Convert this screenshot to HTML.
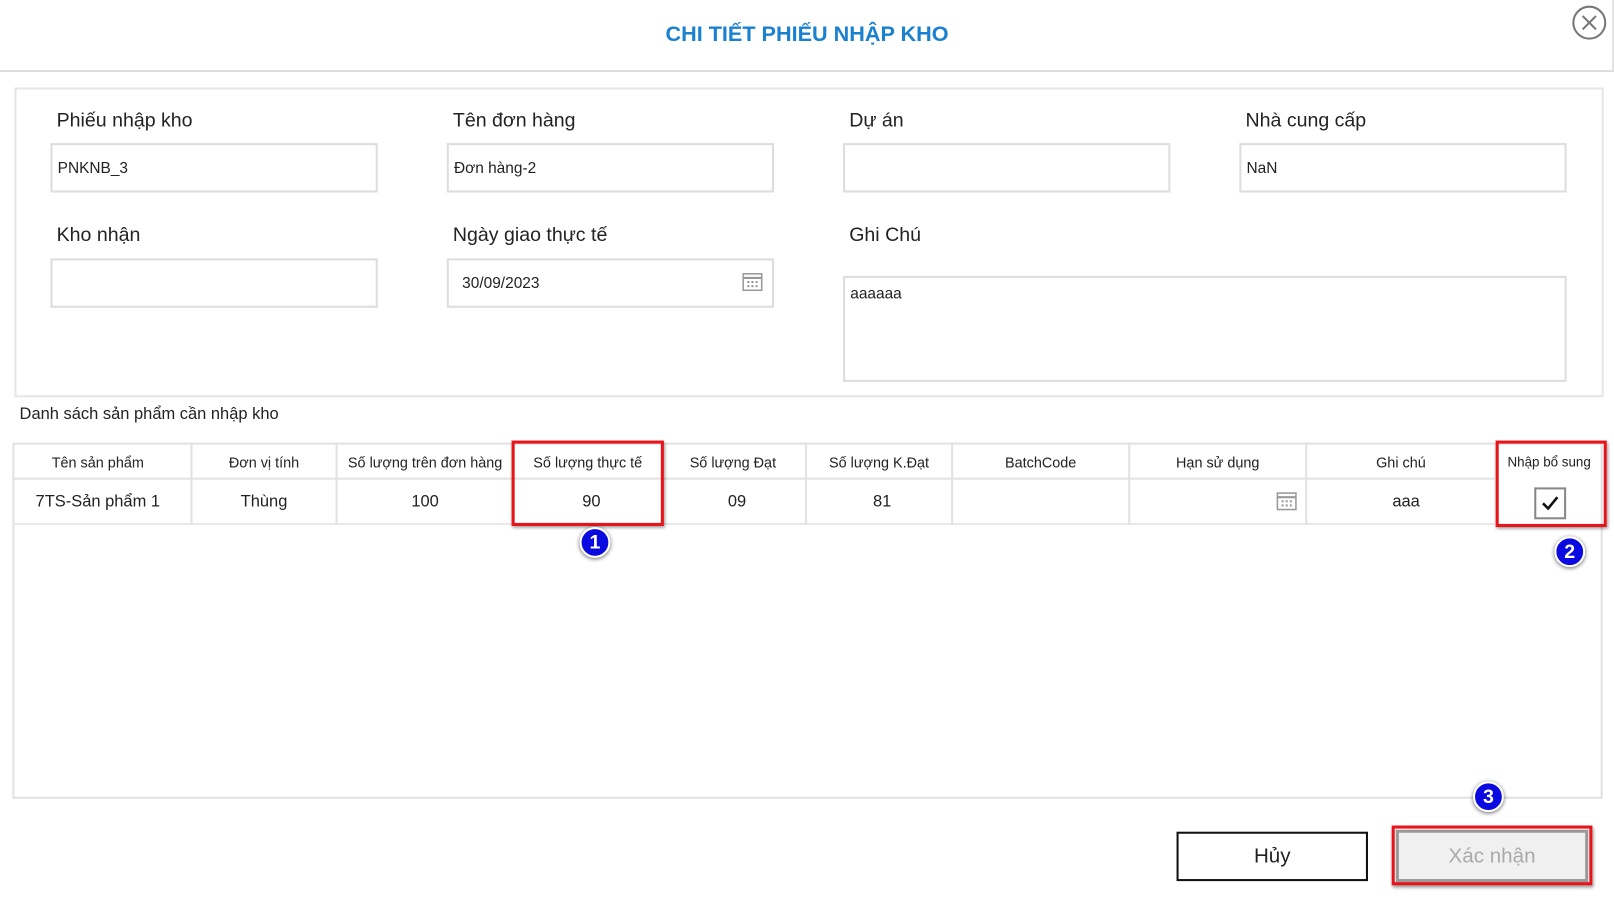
<!DOCTYPE html>
<html><head><meta charset="utf-8"><style>
html,body{margin:0;padding:0;background:#fff;width:1614px;height:906px;overflow:hidden}
#w{position:absolute;left:0;top:0;width:1568px;height:880px;transform:scale(1.02934);transform-origin:0 0;font-family:"Liberation Sans",sans-serif;color:#222}
.a{position:absolute}
.lbl{font-size:19px;color:#222}
.in{position:absolute;border:2px solid #ddd;box-sizing:border-box;background:#fff;font-size:15px;padding-left:5px;line-height:45px}
.c{position:absolute;box-sizing:border-box;text-align:center;font-size:14px}
.badge{position:absolute;width:26px;height:26px;border-radius:50%;background:#0a0ae0;border:2px solid #fff;box-shadow:0 1px 4px rgba(0,0,0,.6);color:#fff;font-weight:bold;font-size:19px;text-align:center;line-height:27px}
.red{position:absolute;border:3px solid #e8141a;box-sizing:border-box;box-shadow:1px 2px 3px rgba(0,0,0,.4)}
</style></head><body><div id="w">
<div class="a" style="left:0;top:0;width:1566px;height:68px;border-right:2px solid #e4e4e4;border-bottom:2px solid #ddd"></div>
<div class="a" style="left:0;top:22px;width:1568px;text-align:center;font-size:21px;font-weight:bold;color:#1a80d0">CHI TIẾT PHIẾU NHẬP KHO</div>
<svg class="a" style="left:1527px;top:5px" width="34" height="34"><circle cx="17" cy="17" r="15.5" fill="none" stroke="#777" stroke-width="2"/><path d="M10.5 10.5L23.5 23.5M23.5 10.5L10.5 23.5" stroke="#777" stroke-width="2"/></svg>

<div class="a" style="left:14px;top:85px;width:1544px;height:301px;border:2px solid #e6e6e6;box-sizing:border-box"></div>
<div class="a lbl" style="left:55px;top:107px">Phiếu nhập kho</div>
<div class="a lbl" style="left:440px;top:107px">Tên đơn hàng</div>
<div class="a lbl" style="left:825px;top:107px">Dự án</div>
<div class="a lbl" style="left:1210px;top:107px">Nhà cung cấp</div>
<div class="in" style="left:49px;top:139px;width:318px;height:48px">PNKNB_3</div>
<div class="in" style="left:434px;top:139px;width:318px;height:48px">Đơn hàng-2</div>
<div class="in" style="left:819px;top:139px;width:318px;height:48px"></div>
<div class="in" style="left:1204px;top:139px;width:318px;height:48px">NaN</div>
<div class="a lbl" style="left:55px;top:218px">Kho nhận</div>
<div class="a lbl" style="left:440px;top:218px">Ngày giao thực tế</div>
<div class="a lbl" style="left:825px;top:218px">Ghi Chú</div>
<div class="in" style="left:49px;top:251px;width:318px;height:48px"></div>
<div class="in" style="left:434px;top:251px;width:318px;height:48px;padding-left:13px">30/09/2023</div>
<svg class="a" style="left:721px;top:265px" width="20" height="18"><rect x="1" y="1" width="18" height="16" fill="none" stroke="#999" stroke-width="1.5"/><path d="M1 5H19" stroke="#999" stroke-width="2"/><g fill="#999"><rect x="5" y="8" width="2" height="2"/><rect x="9" y="8" width="2" height="2"/><rect x="13" y="8" width="2" height="2"/><rect x="5" y="12" width="2" height="2"/><rect x="9" y="12" width="2" height="2"/><rect x="13" y="12" width="2" height="2"/></g></svg>
<div class="in" style="left:819px;top:268px;width:703px;height:103px;line-height:31px">aaaaaa</div>

<div class="a" style="left:19px;top:394px;font-size:16px">Danh sách sản phẩm cần nhập kho</div>

<div class="a" style="left:12px;top:430px;width:1545px;height:346px;border:2px solid #e2e2e2;box-sizing:border-box"></div>
<div class="a" style="left:12px;top:464px;width:1440px;height:2px;background:#e2e2e2"></div>
<div class="a" style="left:12px;top:508px;width:1440px;height:2px;background:#e8e8e8"></div>
<div class="a" style="left:185px;top:430px;width:2px;height:80px;background:#e2e2e2"></div>
<div class="a" style="left:326px;top:430px;width:2px;height:80px;background:#e2e2e2"></div>
<div class="a" style="left:782px;top:430px;width:2px;height:80px;background:#e2e2e2"></div>
<div class="a" style="left:924px;top:430px;width:2px;height:80px;background:#e2e2e2"></div>
<div class="a" style="left:1096px;top:430px;width:2px;height:80px;background:#e2e2e2"></div>
<div class="a" style="left:1268px;top:430px;width:2px;height:80px;background:#e2e2e2"></div>
<div class="c" style="left:12px;top:441px;width:166px">Tên sản phẩm</div>
<div class="c" style="left:186px;top:441px;width:141px">Đơn vị tính</div>
<div class="c" style="left:327px;top:441px;width:172px">Số lượng trên đơn hàng</div>
<div class="c" style="left:498px;top:441px;width:146px">Số lượng thực tế</div>
<div class="c" style="left:644px;top:441px;width:136px">Số lượng Đạt</div>
<div class="c" style="left:783px;top:441px;width:142px">Số lượng K.Đạt</div>
<div class="c" style="left:925px;top:441px;width:172px">BatchCode</div>
<div class="c" style="left:1097px;top:441px;width:172px">Hạn sử dụng</div>
<div class="c" style="left:1269px;top:441px;width:184px">Ghi chú</div>
<div class="c" style="left:1453px;top:441px;width:104px;font-size:13px">Nhập bổ sung</div>
<div class="c" style="left:12px;top:479px;width:166px;font-size:16px">7TS-Sản phẩm 1</div>
<div class="c" style="left:186px;top:479px;width:141px;font-size:16px">Thùng</div>
<div class="c" style="left:327px;top:479px;width:172px;font-size:16px">100</div>
<div class="c" style="left:498px;top:479px;width:153px;font-size:16px">90</div>
<div class="c" style="left:644px;top:479px;width:144px;font-size:16px">09</div>
<div class="c" style="left:783px;top:479px;width:148px;font-size:16px">81</div>
<div class="c" style="left:1269px;top:479px;width:194px;font-size:16px">aaa</div>
<svg class="a" style="left:1240px;top:478px" width="20" height="18"><rect x="1" y="1" width="18" height="16" fill="none" stroke="#999" stroke-width="1.5"/><path d="M1 5H19" stroke="#999" stroke-width="2"/><g fill="#999"><rect x="5" y="8" width="2" height="2"/><rect x="9" y="8" width="2" height="2"/><rect x="13" y="8" width="2" height="2"/><rect x="5" y="12" width="2" height="2"/><rect x="9" y="12" width="2" height="2"/><rect x="13" y="12" width="2" height="2"/></g></svg>
<svg class="a" style="left:1490px;top:473px" width="33" height="32"><rect x="1.5" y="1.5" width="29" height="29" fill="#fff" stroke="#888" stroke-width="2"/><path d="M9 16L14 21L23 10" fill="none" stroke="#111" stroke-width="2.5"/></svg>

<div class="red" style="left:497px;top:428px;width:148px;height:83px"></div>
<div class="red" style="left:1453px;top:428px;width:108px;height:84px"></div>
<div class="badge" style="left:563px;top:512px">1</div>
<div class="badge" style="left:1510px;top:521px">2</div>
<div class="badge" style="left:1431px;top:759px">3</div>

<div class="a" style="left:1143px;top:808px;width:186px;height:48px;border:2px solid #111;box-sizing:border-box;text-align:center;line-height:45px;font-size:20px">Hủy</div>
<div class="a" style="left:1356px;top:806px;width:187px;height:51px;border:3px solid #999;background:#f0f0f0;box-sizing:border-box;text-align:center;line-height:47px;font-size:20px;color:#aaa">Xác nhận</div>
<div class="red" style="left:1352px;top:802px;width:195px;height:58px"></div>
</div></body></html>
